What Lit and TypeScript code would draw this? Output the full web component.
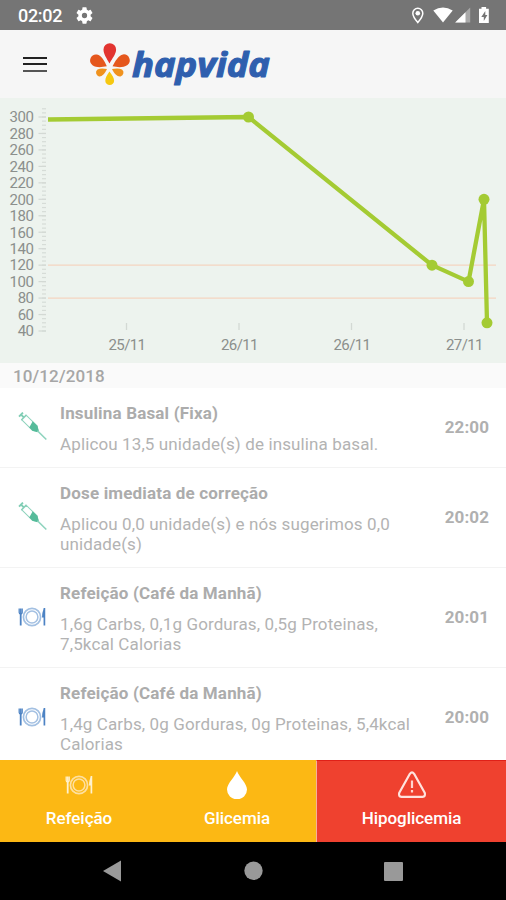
import { LitElement, html, css, svg } from "lit";
import { customElement, property } from "lit/decorators.js";

type EntryKind = "dose" | "meal";
interface Entry {
  kind: EntryKind;
  title: string;
  body: string;
  time: string;
}

const ENTRIES: Entry[] = [
  { kind: "dose", title: "Insulina Basal (Fixa)", body: "Aplicou 13,5 unidade(s) de insulina basal.", time: "22:00" },
  { kind: "dose", title: "Dose imediata de correção", body: "Aplicou 0,0 unidade(s) e nós sugerimos 0,0 unidade(s)", time: "20:02" },
  { kind: "meal", title: "Refeição (Café da Manhã)", body: "1,6g Carbs, 0,1g Gorduras, 0,5g Proteinas, 7,5kcal Calorias", time: "20:01" },
  { kind: "meal", title: "Refeição (Café da Manhã)", body: "1,4g Carbs, 0g Gorduras, 0g Proteinas, 5,4kcal Calorias", time: "20:00" },
];

const syringe = html`<svg width="30" height="30" viewBox="0 0 30 30" fill="none">
  <g transform="translate(4 2.6) rotate(44.5)">
    <path d="M0 -2.8V2.8M0 0H4" stroke="#7fcdb4" stroke-width="1.9" />
    <path d="M4 -3.7V3.7" stroke="#7fcdb4" stroke-width="1.2" />
    <path d="M4.4 -3.2H19.5L22.5 -1V1L19.5 3.2H4.4Z" stroke="#8ed3bd" stroke-width="1" fill="#fff" />
    <path d="M13 -3.5H19.5L24 -1V1L19.5 3.5H15Z" fill="#55bb9a" />
    <path d="M23 0H35.500" stroke="#8ed3bd" stroke-width="1.600" />
  </g>
</svg>`;

const plate = (main: string, soft: string) => html`<svg width="30" height="22" viewBox="0 0 30 22" fill="none">
  <circle cx="15" cy="11" r="8.6" stroke=${soft} stroke-width="1.7" />
  <circle cx="15" cy="11" r="5.9" stroke=${soft} stroke-width="1.5" />
  <path d="M2.2 2.5V6.5Q2.2 8 3.7 8T5.2 6.5V2.5M3.7 2.5V8" stroke=${main} stroke-width="1.3" />
  <path d="M3.7 8V19.5" stroke=${main} stroke-width="1.8" />
  <path d="M27.4 2V19.5" stroke=${main} stroke-width="1.7" />
  <path d="M27.6 2Q25 5 25 11.5H27.6Z" fill=${main} />
</svg>`;

@customElement("status-bar")
class StatusBar extends LitElement {
  static styles = css`
    :host { display: flex; align-items: center; height: 30px; background: #757575; color: #fff;
      padding: 0 16px 0 18px; box-sizing: border-box; flex: none; }
    .clock { font-size: 18px; font-weight: 500; line-height: 30px; width: 57.5px; padding-top: 2px; letter-spacing: -0.3px; }
    .right { margin-left: auto; display: flex; align-items: center; }
    svg { display: block; }
  `;
  render() {
    return html`
      <span class="clock">02:02</span>
      <svg width="17" height="17" viewBox="2 2 20 20"><path fill="#fff" d="M19.14 12.94c.04-.3.06-.61.06-.94 0-.32-.02-.64-.07-.94l2.03-1.58a.49.49 0 0 0 .12-.61l-1.92-3.32a.49.49 0 0 0-.59-.22l-2.39.96c-.5-.38-1.03-.7-1.62-.94l-.36-2.54a.48.48 0 0 0-.48-.41h-3.84c-.24 0-.43.17-.47.41l-.36 2.54c-.59.24-1.13.57-1.62.94l-2.39-.96a.48.48 0 0 0-.59.22L2.74 8.87c-.12.21-.08.47.12.61l2.03 1.58c-.05.3-.09.63-.09.94s.02.64.07.94l-2.03 1.58a.49.49 0 0 0-.12.61l1.92 3.32c.12.22.37.29.59.22l2.39-.96c.5.38 1.03.7 1.62.94l.36 2.54c.05.24.24.41.48.41h3.84c.24 0 .44-.17.47-.41l.36-2.54c.59-.24 1.13-.56 1.62-.94l2.39.96c.22.08.47 0 .59-.22l1.92-3.32a.49.49 0 0 0-.12-.61zM12 15.1a3.1 3.1 0 1 1 0-6.2 3.1 3.1 0 0 1 0 6.2z" /></svg>
      <div class="right">
        <svg width="80" height="20" viewBox="0 0 80 20">
          <path d="M7.8 3.2a5 5 0 0 0-5 5c0 3.5 5 9.3 5 9.3s5-5.8 5-9.3a5 5 0 0 0-5-5z" fill="none" stroke="#fff" stroke-width="1.5" />
          <circle cx="7.8" cy="8.2" r="2.3" fill="#fff" />
          <path d="M23.3 5.6Q33 -0.4 42.7 5.6L33 17.6Z" fill="#fff" />
          <path d="M60.2 2.5V17.5H45.2Z" fill="#a9a9a9" />
          <path d="M55.5 7.2V17.5H45.2Z" fill="#fff" />
          <path d="M69 3.8h2.5V2h4.6v1.8h2.7V18H69z" fill="#fff" />
          <path d="M75.3 6l-4 6h2.5v4l3.6-6h-2.1z" fill="#757575" />
        </svg>
      </div>`;
  }
}

@customElement("app-header")
class AppHeader extends LitElement {
  static styles = css`
    :host { display: flex; height: 68px; background: #f6f6f6; flex: none; align-items: center; padding-left: 23px; }
    .menu { display: flex; flex-direction: column; gap: 4.5px; width: 23.5px; margin-right: 41.5px; }
    .bar { height: 2px; background: #222; }
    .bar:last-child { background: #555; }
    .word { font-family: "Open Sans", "Noto Sans", sans-serif; font-weight: 700; font-style: italic; font-size: 33.5px; }
    svg { display: block; }
  `;
  render() {
    return html`
      <div class="menu"><div class="bar"></div><div class="bar"></div><div class="bar"></div></div>
      <svg width="190" height="68" viewBox="88.5 30 190 68">
        <path d="M110 63.5C107 58 104 54 104 49.5a6.3 6.3 0 0 1 12.6 0C116.6 54 113 58 110 63.5Z" fill="#e23430" />
        <path d="M107.3 66.3C102 67.3 97 68 93 65.2a6 6 0 0 1 4.5-10.7C102 55.5 105 61 107.3 66.3Z" fill="#e5571d" />
        <path d="M113 66.3C118 67.3 123.500 68 128 65a6 6 0 0 0-4.500-10.600C119 55.500 115.500 61 113 66.300Z" fill="#e5571d" />
        <path d="M107.500 69C105 74 102.500 76.800 99.500 76.400a4 4 0 0 1-1.500-7C101 68 104 68.300 107.500 69Z" fill="#f0921e" />
        <path d="M112.500 69C115 74 117.800 76.800 121 76.400a4 4 0 0 0 1.500-7C119.500 68 116 68.300 112.500 69Z" fill="#f0921e" />
        <path d="M110 71.500C107.500 75 105.800 77.500 105.800 80.700a4.400 4.400 0 0 0 8.800 0C114.600 77.500 112.500 75 110 71.500Z" fill="#f6c811" />
        <text class="word" x="132.500" y="77" textLength="138" lengthAdjust="spacingAndGlyphs" fill="#2f5fae" stroke="#2f5fae" stroke-width="1.100" stroke-linejoin="round">hapvida</text>
      </svg>`;
  }
}

@customElement("glucose-chart")
class GlucoseChart extends LitElement {
  static styles = css`
    :host { display: block; height: 265px; background: #edf3ee; flex: none; }
    svg { display: block; }
    text { font-family: Roboto, sans-serif; font-size: 15px; fill: #8b8f8c; }
  `;
  render() {
    const y = (v: number) => 331 - ((v - 40) * 214) / 260;
    const levels = Array.from({ length: 14 }, (_, i) => 40 + i * 20);
    const minor = Array.from({ length: 55 }, (_, i) => 40 + i * 5);
    const points = [[248.5, 300], [432, 120], [468.5, 100], [484, 200], [487, 50]];
    const days: [number, string][] = [[126.5, "25/11"], [239, "26/11"], [351.5, "26/11"], [464, "27/11"]];
    const line = ["48,119.5", ...points.map(([px, v]) => `${px},${y(v)}`)].join(" ");
    return html`<svg width="506" height="265" viewBox="0 98 506 265">
      ${minor.map((v) => svg`<path d="M42 ${y(v)}H46" stroke="#d6dcd7" stroke-width="1.2" />`)}
      ${levels.map((v) => svg`
        <path d="M38.5 ${y(v)}H46" stroke="#d3d9d4" stroke-width="1.2" />
        <text x="34" y=${y(v) + 5.3} text-anchor="end" textLength=${v < 100 ? 16.3 : 24.5}>${v}</text>`)}
      ${[120, 80].map((v) => svg`<path d="M48 ${y(v)}H496" stroke="#f4d5c0" stroke-width="1.3" />`)}
      ${days.map(([px, label]) => svg`
        <path d="M${px} 323V330" stroke="#d3d9d4" stroke-width="1.3" />
        <text x=${px + 0.8} y="349.6" text-anchor="middle" textLength="37.5">${label}</text>`)}
      <polyline points=${line} fill="none" stroke="#a4cb33" stroke-width="4.3" stroke-linejoin="round" />
      ${points.map(([px, v]) => svg`<circle cx=${px} cy=${y(v)} r="5.5" fill="#a4cb33" />`)}
    </svg>`;
  }
}

@customElement("log-entry")
class LogEntry extends LitElement {
  @property({ attribute: false }) entry!: Entry;
  static styles = css`
    :host { display: flex; padding: 0 17px; border-bottom: 1px solid #f3f3f3; }
    .icon, .time { display: flex; align-items: center; flex: none; padding-bottom: 1px; }
    .icon { width: 30px; margin-right: 13px; }
    .text { flex: 1; padding: 15px 0 12px; }
    .title { font-weight: 700; font-size: 17px; line-height: 20px; color: #acacac; margin-bottom: 11px; letter-spacing: 0.17px; white-space: nowrap; }
    .body { font-size: 17px; line-height: 20.5px; color: #b3b3b3; letter-spacing: 0.12px; width: 362px; }
    .time { font-weight: 700; font-size: 17px; color: #b0b0b0; letter-spacing: 0.1px; }
    svg { display: block; }
  `;
  render() {
    const e = this.entry;
    return html`
      <div class="icon">${e.kind === "dose" ? syringe : plate("#4d83c4", "#a3c0e2")}</div>
      <div class="text">
        <div class="title">${e.title}</div>
        <div class="body">${e.body}</div>
      </div>
      <div class="time">${e.time}</div>`;
  }
}

@customElement("action-bar")
class ActionBar extends LitElement {
  static styles = css`
    :host { display: grid; grid-template-columns: 158px 158px 1fr; height: 82px; flex: none; background: #fcb814;
      color: #fff; font-size: 17px; font-weight: 500; text-align: center; letter-spacing: -0.05px; }
    .action { display: flex; flex-direction: column; align-items: center; }
    .icon { height: 30px; margin-top: 10px; display: flex; align-items: center; }
    .label { line-height: 20px; margin-top: 8px; }
    .alert { background: #ef412f; border-left: 1px solid #f5b09c; border-top: 1px solid #e02018; box-sizing: border-box; }
    .alert .icon { margin-top: 9px; }
  `;
  render() {
    return html`
      <div class="action"><div class="icon">${plate("#fff1cf", "#fee0a0")}</div><div class="label">Refeição</div></div>
      <div class="action"><div class="icon"><svg width="20" height="28" viewBox="0 0 20 28"><path d="M10 0C8 6 0 12.5 0 18.5a9.7 9.5 0 0 0 20 0C20 12.5 12 6 10 0Z" fill="#fff" /></svg></div><div class="label">Glicemia</div></div>
      <div class="action alert"><div class="icon"><svg width="30" height="28" viewBox="0 0 30 28" fill="none">
        <path d="M12.9 2.8Q15 -0.2 17.1 2.8L27.7 21.7Q28.9 25.5 25.5 25.8H4.5Q1.1 25.5 2.3 21.7Z" stroke="#ffe3de" stroke-width="2.2" stroke-linejoin="round" />
        <path d="M15 9.5V17M15 19V21.5" stroke="#ffd5ce" stroke-width="2.2" /></svg></div><div class="label">Hipoglicemia</div></div>`;
  }
}

@customElement("nav-bar")
class NavBar extends LitElement {
  static styles = css`
    :host { display: block; height: 58px; background: #000; flex: none; }
    svg { display: block; }
  `;
  render() {
    return html`<svg width="506" height="58" viewBox="0 842 506 58" fill="#999">
      <path d="M103 871L121 860.5V881.5Z" /><circle cx="253.5" cy="870.8" r="9.2" />
      <rect x="384" y="862" width="19" height="19" rx="1" /></svg>`;
  }
}

@customElement("app-root")
class AppRoot extends LitElement {
  static styles = css`
    :host { display: flex; flex-direction: column; width: 506px; height: 900px; overflow: hidden;
      font-family: Roboto, sans-serif; background: #fff; }
    .date { height: 25px; line-height: 26px; background: #fafafa; padding-left: 13px; font-size: 17px;
      font-weight: 500; color: #a6a6a6; flex: none; letter-spacing: 0.12px; }
    .list { flex: 1; min-height: 0; overflow: hidden; }
  `;
  render() {
    return html`
      <status-bar></status-bar>
      <app-header></app-header>
      <glucose-chart></glucose-chart>
      <div class="date">10/12/2018</div>
      <div class="list">${ENTRIES.map((e) => html`<log-entry .entry=${e}></log-entry>`)}</div>
      <action-bar></action-bar>
      <nav-bar></nav-bar>`;
  }
}
